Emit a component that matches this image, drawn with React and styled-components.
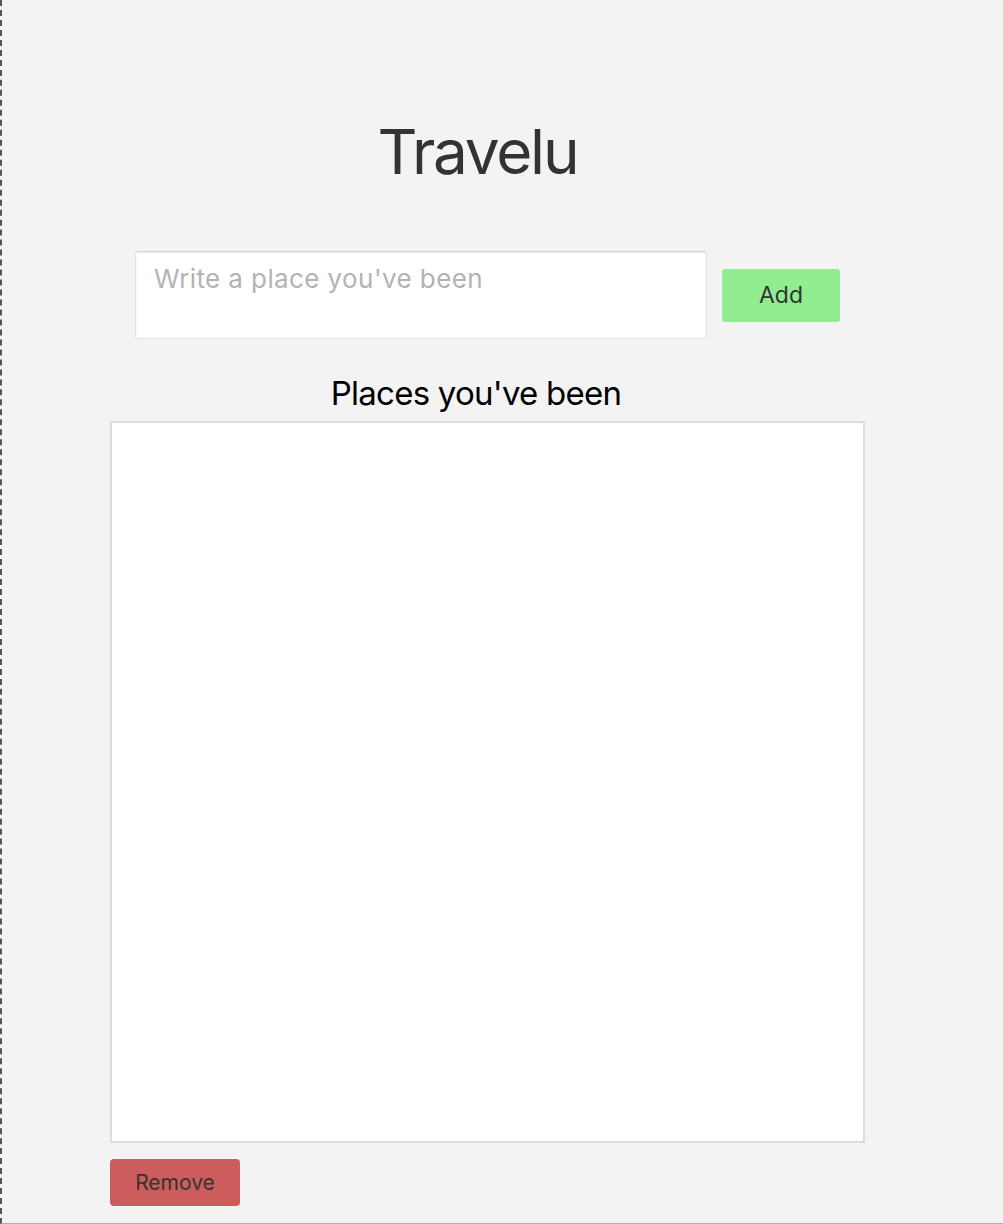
import React from "react";
import styled, { createGlobalStyle } from "styled-components";

const Global = createGlobalStyle`
  html, body { margin: 0; padding: 0; background: #f3f3f3; }
  body { font-family: Inter, "Liberation Sans", sans-serif; }
  * { box-sizing: border-box; }
`;

const Frame = styled.div`
  min-height: 1224px;
  border-left: 2px dashed #555;
  border-right: 1px solid #d8d8d8;
  border-bottom: 1px solid #b0b0b0;
  padding-left: 108px;
  padding-top: 116px;
`;

const Container = styled.main`
  width: 755px;
  display: flex;
  flex-direction: column;
`;

const Title = styled.h1`
  margin: 0;
  padding-right: 20px;
  text-align: center;
  font-size: 62px;
  letter-spacing: -2.2px;
  line-height: 72px;
  font-weight: 400;
  color: #333;
`;

const InputRow = styled.form`
  margin: 63px 0 0 25px;
  display: flex;
  align-items: center;
  gap: 15px;
`;

const PlaceInput = styled.textarea`
  width: 572px;
  height: 88px;
  padding: 11px 18px;
  border: 1px solid #e2e2e2;
  border-top-color: #cfcfcf;
  border-radius: 3px;
  box-shadow: inset 0 1px 2px rgba(0, 0, 0, 0.08);
  background: #fff;
  resize: none;
  font-family: Inter, "Liberation Sans", sans-serif;
  font-size: 26px;
  letter-spacing: 0.4px;
  color: #333;
  outline: none;
  &::placeholder { color: #b3b3b3; }
`;

const Button = styled.button`
  width: ${(p) => p.$w}px;
  height: ${(p) => p.$h}px;
  border: none;
  border-radius: ${(p) => p.$r}px;
  background: ${(p) => p.$bg};
  color: #333;
  font-family: Inter, "Liberation Sans", sans-serif;
  font-size: ${(p) => p.$fs}px;
  padding: 0;
  cursor: pointer;
`;

const Heading = styled.h2`
  margin: 35px 0 0;
  padding-right: 23px;
  text-align: center;
  font-size: 33px;
  letter-spacing: -0.75px;
  line-height: 38px;
  font-weight: 400;
  color: #000;
`;

const ListBox = styled.ul`
  margin: 9px 0 0;
  padding: 0;
  list-style: none;
  width: 755px;
  height: 722px;
  background: #fff;
  border: 2px solid #dcdcdc;
`;

const Footer = styled.div`
  margin-top: 16px;
`;

export default function App() {
  return (
    <>
      <Global />
      <Frame>
        <Container>
          <Title>Travelu</Title>
          <InputRow onSubmit={(e) => e.preventDefault()}>
            <PlaceInput placeholder="Write a place you've been" />
            <Button type="submit" $w={118} $h={53} $r={3} $bg="#90ee90" $fs={23}>
              Add
            </Button>
          </InputRow>
          <Heading>Places you've been</Heading>
          <ListBox />
          <Footer>
            <Button type="button" $w={130} $h={47} $r={4} $bg="#cd5c5c" $fs={21}>
              Remove
            </Button>
          </Footer>
        </Container>
      </Frame>
    </>
  );
}
